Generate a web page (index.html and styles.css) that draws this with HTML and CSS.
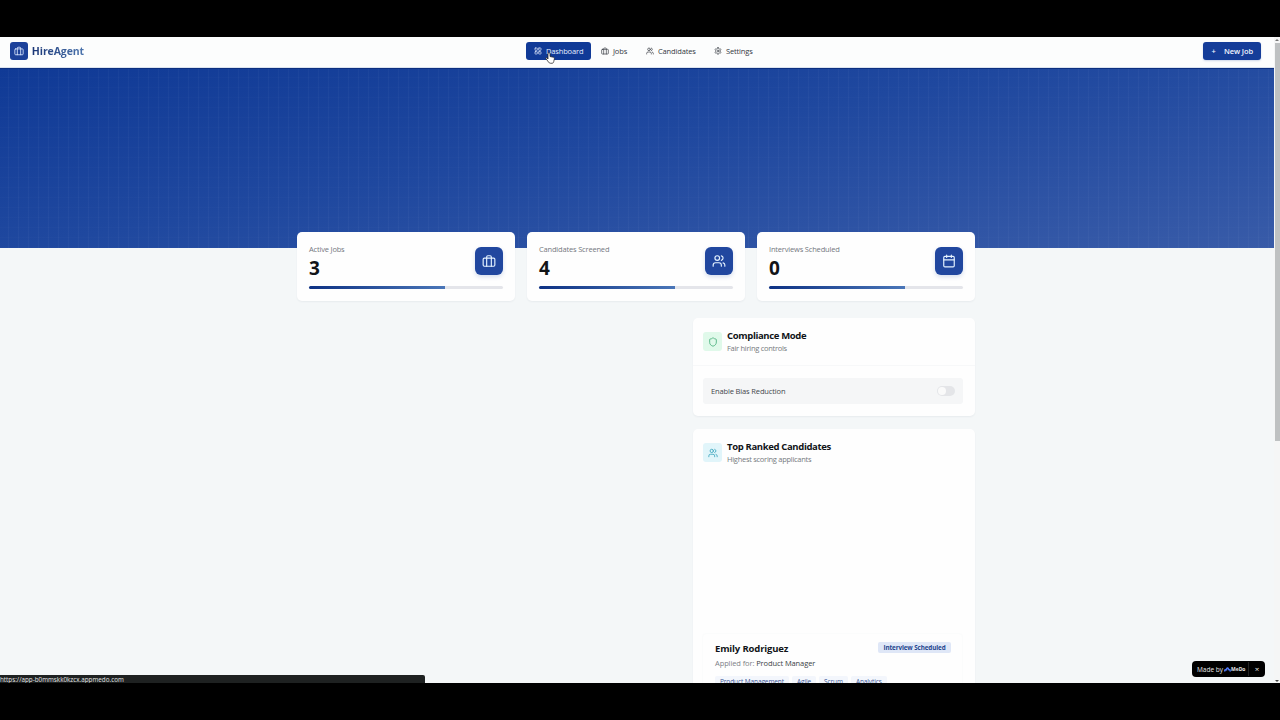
FILE: index.html
```html
<!DOCTYPE html>
<html lang="en">
<head>
    <meta charset="UTF-8">
    <meta name="viewport" content="width=device-width, initial-scale=1.0">
    <title>HireAgent</title>
    <link rel="stylesheet" href="styles.css">
</head>
<body>
    <svg class="sprite" width="0" height="0">
        <symbol id="briefcase" viewBox="0 0 24 24"><rect x="2" y="7" width="20" height="14" rx="2"/><path d="M16 21V5a2 2 0 0 0-2-2h-4a2 2 0 0 0-2 2v16"/></symbol>
        <symbol id="users" viewBox="0 0 24 24"><path d="M16 21v-2a4 4 0 0 0-4-4H6a4 4 0 0 0-4 4v2"/><circle cx="9" cy="7" r="4"/><path d="M22 21v-2a4 4 0 0 0-3-3.870M16 3.130a4 4 0 0 1 0 7.750"/></symbol>
        <symbol id="users-round" viewBox="0 0 24 24"><path d="M18 21a8 8 0 0 0-16 0"/><circle cx="10" cy="8" r="5"/><path d="M22 20c0-3.370-2-6.500-4-8a5 5 0 0 0-.45-8.300"/></symbol>
        <symbol id="calendar" viewBox="0 0 24 24"><rect x="3" y="4" width="18" height="18" rx="2"/><path d="M8 2v4M16 2v4M3 10h18"/></symbol>
        <symbol id="shield" viewBox="0 0 24 24"><path d="M20 13c0 5-3.5 7.5-7.66 8.95a1 1 0 0 1-.67-.01C7.5 20.500 4 18 4 13V6a1 1 0 0 1 1-1c2 0 4.500-1.200 6.240-2.720a1.170 1.170 0 0 1 1.520 0C14.510 3.810 17 5 19 5a1 1 0 0 1 1 1z"/></symbol>
        <symbol id="dashboard" viewBox="0 0 24 24"><rect x="3" y="3" width="7" height="7" rx="1"/><rect x="14" y="3" width="7" height="7" rx="1"/><rect x="14" y="14" width="7" height="7" rx="1"/><rect x="3" y="14" width="7" height="7" rx="1"/></symbol>
        <symbol id="settings" viewBox="0 0 24 24"><path d="M12.220 2h-.44a2 2 0 0 0-2 2v.18a2 2 0 0 1-1 1.730l-.43.250a2 2 0 0 1-2 0l-.15-.08a2 2 0 0 0-2.730.730l-.22.380a2 2 0 0 0 .730 2.730l.150.100a2 2 0 0 1 1 1.720v.510a2 2 0 0 1-1 1.740l-.15.090a2 2 0 0 0-.73 2.730l.220.380a2 2 0 0 0 2.730.730l.150-.08a2 2 0 0 1 2 0l.430.250a2 2 0 0 1 1 1.730V20a2 2 0 0 0 2 2h.440a2 2 0 0 0 2-2v-.18a2 2 0 0 1 1-1.730l.430-.25a2 2 0 0 1 2 0l.150.080a2 2 0 0 0 2.730-.73l.220-.39a2 2 0 0 0-.73-2.730l-.15-.08a2 2 0 0 1-1-1.740v-.5a2 2 0 0 1 1-1.740l.150-.09a2 2 0 0 0 .730-2.730l-.22-.38a2 2 0 0 0-2.730-.73l-.15.080a2 2 0 0 1-2 0l-.43-.25a2 2 0 0 1-1-1.730V4a2 2 0 0 0-2-2z"/><circle cx="12" cy="12" r="3"/></symbol>
    </svg>

    <div class="screen">
        <div class="page">
            <header class="header">
                <div class="brand">
                    <span class="brand-icon"><svg class="icon"><use href="#briefcase"/></svg></span>
                    <span class="brand-name">HireAgent</span>
                </div>
                <nav class="nav">
                    <a class="nav-link active"><svg class="icon"><use href="#dashboard"/></svg><span>Dashboard</span></a>
                    <a class="nav-link nav-jobs"><svg class="icon"><use href="#briefcase"/></svg><span>Jobs</span></a>
                    <a class="nav-link nav-candidates"><svg class="icon"><use href="#users"/></svg><span>Candidates</span></a>
                    <a class="nav-link nav-settings"><svg class="icon"><use href="#settings"/></svg><span>Settings</span></a>
                </nav>
                <button class="new-job"><span class="plus">+</span><span>New Job</span></button>
            </header>

            <div class="hero"></div>

            <main class="container">
                <section class="stats">
                    <div class="card stat">
                        <div class="stat-top">
                            <div>
                                <div class="stat-label">Active Jobs</div>
                                <div class="stat-value">3</div>
                            </div>
                            <span class="stat-icon"><svg class="icon"><use href="#briefcase"/></svg></span>
                        </div>
                        <div class="progress"><div class="progress-bar"></div></div>
                    </div>
                    <div class="card stat">
                        <div class="stat-top">
                            <div>
                                <div class="stat-label">Candidates Screened</div>
                                <div class="stat-value">4</div>
                            </div>
                            <span class="stat-icon"><svg class="icon"><use href="#users"/></svg></span>
                        </div>
                        <div class="progress"><div class="progress-bar"></div></div>
                    </div>
                    <div class="card stat">
                        <div class="stat-top">
                            <div>
                                <div class="stat-label">Interviews Scheduled</div>
                                <div class="stat-value">0</div>
                            </div>
                            <span class="stat-icon"><svg class="icon"><use href="#calendar"/></svg></span>
                        </div>
                        <div class="progress"><div class="progress-bar"></div></div>
                    </div>
                </section>

                <aside class="sidebar">
                    <section class="card compliance">
                        <div class="card-header">
                            <span class="card-icon green"><svg class="icon"><use href="#shield"/></svg></span>
                            <div>
                                <h2>Compliance Mode</h2>
                                <p>Fair hiring controls</p>
                            </div>
                        </div>
                        <div class="setting">
                            <span>Enable Bias Reduction</span>
                            <span class="switch"></span>
                        </div>
                    </section>

                    <section class="card ranked">
                        <div class="card-header">
                            <span class="card-icon cyan"><svg class="icon"><use href="#users"/></svg></span>
                            <div>
                                <h2>Top Ranked Candidates</h2>
                                <p>Highest scoring applicants</p>
                            </div>
                        </div>
                        <div class="candidate">
                            <div class="candidate-top">
                                <h3>Emily Rodriguez</h3>
                                <span class="badge">Interview Scheduled</span>
                            </div>
                            <p class="applied">Applied for: <span>Product Manager</span></p>
                            <div class="tags">
                                <span class="tag">Product Management</span>
                                <span class="tag">Agile</span>
                                <span class="tag">Scrum</span>
                                <span class="tag">Analytics</span>
                            </div>
                        </div>
                    </section>
                </aside>
            </main>
        </div>

        <div class="scrollbar">
            <span class="arrow-up"></span>
            <div class="thumb"></div>
            <span class="arrow-down"></span>
        </div>

        <div class="made-by">
            <span class="made-text">Made by</span>
            <svg class="medo-logo" viewBox="0 0 14 10"><path d="M1.500 9C1 5 4 4.500 4.500 7 4.500 1 9 0 9 5c3-1 3.500 2 3 4" stroke="#4f78f5" stroke-width="3" fill="none"/></svg>
            <span class="medo">MeDo</span>
            <span class="made-close">×</span>
        </div>

        <div class="status-url">https://app-b0mmskk0kzcx.appmedo.com</div>

        <svg class="cursor" viewBox="0 0 20 24"><path d="M6 14V3.500a2 2 0 0 1 4 0V9l7 1.500c1.500.400 2 1.500 1.800 3L17.500 19c-.3 2-1.500 3.500-3.500 3.500h-3c-2 0-3-1-4-2.500L2 13.500C1 12 3 10.800 4.200 12z" fill="#fff" stroke="#222" stroke-width="1.500"/></svg>
    </div>
</body>
</html>
```

FILE: styles.css
```css
* {
    box-sizing: border-box;
}
body {
    margin: 0;
    height: 720px;
    padding: 37px 0;
    overflow: hidden;
    background: #000;
    font-family: "Open Sans", "Noto Sans", sans-serif;
    color: #111418;
}
h2, h3, p {
    margin: 0;
}
.sprite {
    position: absolute;
}
.icon {
    display: block;
    flex: none;
    width: 8px;
    height: 8px;
    fill: none;
    stroke: currentColor;
    stroke-width: 2;
    stroke-linecap: round;
    stroke-linejoin: round;
}
.screen {
    position: relative;
    display: flex;
    height: 646px;
    overflow: hidden;
    background: #f4f7f8;
}
.page {
    width: 1274px;
}

/* header */
.header {
    display: flex;
    align-items: center;
    justify-content: space-between;
    height: 31px;
    padding: 0 13px 3px 10px;
    background: #fcfdfd;
    border-bottom: 1px solid #dbe3ef;
}
.brand {
    display: flex;
    align-items: center;
    gap: 4px;
    width: 74px;
}
.brand-icon {
    display: flex;
    align-items: center;
    justify-content: center;
    width: 18px;
    height: 18px;
    border-radius: 3px;
    background: #1c419a;
    color: #dce8ff;
}
.brand-icon .icon {
    width: 10px;
    height: 10px;
}
.brand-name {
    font-size: 10.500px;
    font-weight: 700;
    letter-spacing: -0.1px;
    background: linear-gradient(90deg, #1a3676, #4b74ad);
    -webkit-background-clip: text;
    background-clip: text;
    color: transparent;
}
.nav {
    display: flex;
    gap: 2px;
}
.nav-link {
    display: flex;
    align-items: center;
    gap: 4px;
    height: 18px;
    padding-left: 8px;
    border-radius: 3px;
    font-size: 7.500px;
    letter-spacing: -0.15px;
    white-space: nowrap;
    color: #33383f;
}
.nav-link.active {
    width: 65px;
    background: #103a97;
    color: #e6efff;
}
.nav-jobs {
    width: 43px;
}
.nav-candidates {
    width: 66px;
}
.nav-settings {
    width: 55px;
}
.new-job {
    display: flex;
    align-items: center;
    gap: 8px;
    width: 58px;
    height: 18px;
    padding: 0 0 0 8px;
    border: none;
    border-radius: 3px;
    background: #153d99;
    color: #f0f5ff;
    font-family: inherit;
    font-size: 7.500px;
    font-weight: 600;
    letter-spacing: -0.1px;
    white-space: nowrap;
    box-shadow: 0 1px 2px rgba(20, 60, 150, 0.2);
}
.plus {
    width: 5px;
}

/* hero */
.hero {
    height: 180px;
    background:
        repeating-linear-gradient(90deg, transparent 0 8px, rgba(255, 255, 255, 0.03) 8px 9px, transparent 9px 10px),
        repeating-linear-gradient(180deg, transparent 0 8px, rgba(255, 255, 255, 0.01) 8px 9px, transparent 9px 10px),
        linear-gradient(170deg, #103a96 0%, #1f489f 45%, #385ba8 100%);
    border-top: 1px solid #0c2f80;
}

/* content */
.container {
    position: relative;
    width: 678px;
    margin: -16px 0 0 297px;
}
.card {
    background: #fefefe;
    border-radius: 5px;
    box-shadow: 0 1px 2px rgba(30, 50, 80, 0.06);
}
.stats {
    display: grid;
    grid-template-columns: repeat(3, 1fr);
    gap: 12px;
}
.stat {
    height: 69px;
    padding: 11px 12px;
}
.stat-top {
    display: flex;
    justify-content: space-between;
    height: 43px;
}
.stat-label {
    font-size: 7.500px;
    letter-spacing: -0.18px;
    line-height: 13px;
    color: #74787e;
}
.stat-value {
    font-size: 19px;
    font-weight: 700;
    line-height: 25px;
}
.stat-icon {
    display: flex;
    align-items: center;
    justify-content: center;
    width: 28px;
    height: 28px;
    margin-top: 4px;
    border-radius: 6px;
    background: #21479f;
    color: #e4f2ff;
    box-shadow: 0 2px 4px rgba(30, 70, 160, 0.18);
}
.stat-icon .icon {
    width: 14px;
    height: 14px;
}
.progress {
    height: 3px;
    border-radius: 2px;
    background: #e4e5ea;
}
.progress-bar {
    width: 70%;
    height: 3px;
    border-radius: 2px 0 0 2px;
    background: linear-gradient(90deg, #0e3284, #4a76b8);
}
.sidebar {
    width: 282px;
    margin: 17px 0 0 auto;
}
.compliance {
    height: 98px;
    margin-bottom: 13px;
}
.card-header {
    display: flex;
    align-items: center;
    gap: 5px;
    height: 48px;
    padding-left: 10px;
}
.compliance .card-header {
    border-bottom: 1px solid #f7f8f9;
}
.ranked .card-header {
    height: 47px;
}
.card-icon {
    display: flex;
    align-items: center;
    justify-content: center;
    width: 19px;
    height: 19px;
    border-radius: 3px;
}
.card-icon .icon {
    width: 10px;
    height: 10px;
}
.green {
    background: #e0f9ea;
    color: #45ad78;
}
.cyan {
    background: #e1f5fa;
    color: #3ba5bd;
}
h2 {
    font-size: 9.500px;
    font-weight: 700;
    letter-spacing: -0.35px;
    line-height: 13px;
}
.card-header p {
    font-size: 7.500px;
    letter-spacing: -0.28px;
    line-height: 12px;
    color: #767a80;
}
.setting {
    display: flex;
    align-items: center;
    justify-content: space-between;
    height: 26px;
    margin: 12px 12px 0 10px;
    padding: 0 8px;
    border-radius: 3px;
    background: #f5f6f7;
    font-size: 7.500px;
    letter-spacing: -0.14px;
    color: #43474c;
}
.switch {
    width: 18px;
    height: 10px;
    padding: 1px;
    border-radius: 5px;
    background: #e4e5e8;
}
.switch::before {
    content: "";
    display: block;
    width: 8px;
    height: 8px;
    border-radius: 50%;
    background: #fafafa;
}
.ranked {
    height: 300px;
}
.candidate {
    margin: 157px 12px 0 9px;
    padding: 8px 11px 8px 12px;
    border: 1px solid #fbfcfc;
    border-radius: 4px;
}
.candidate-top {
    display: flex;
    justify-content: space-between;
    height: 14px;
}
h3 {
    font-size: 9.500px;
    font-weight: 700;
    letter-spacing: -0.15px;
    line-height: 14px;
}
.badge {
    width: 73px;
    height: 11px;
    border-radius: 2px;
    background: #dfe7f7;
    color: #24458e;
    font-size: 6.300px;
    font-weight: 700;
    letter-spacing: -0.1px;
    line-height: 11px;
    text-align: center;
    white-space: nowrap;
}
.applied {
    font-size: 7.500px;
    letter-spacing: -0.1px;
    line-height: 14px;
    color: #7d8187;
}
.applied span {
    color: #3b3f45;
}
.tags {
    display: flex;
    gap: 3px;
    margin-top: 6px;
}
.tag {
    padding: 0 5px;
    border-radius: 2px;
    background: #f3f6fc;
    color: #3c5795;
    font-size: 6.500px;
    letter-spacing: -0.1px;
    line-height: 11px;
    white-space: nowrap;
}

/* browser scrollbar */
.scrollbar {
    display: flex;
    flex-direction: column;
    align-items: center;
    width: 6px;
    background: #f5f6f6;
}
.arrow-up,
.arrow-down {
    border-left: 2px solid transparent;
    border-right: 2px solid transparent;
}
.arrow-up {
    margin: 2px 0;
    border-bottom: 2px solid #777;
}
.arrow-down {
    margin: auto 0 1px;
    border-top: 2px solid #444;
}
.thumb {
    width: 5px;
    height: 398px;
    margin-left: 1px;
    background: #bec1c2;
}

/* overlays */
.made-by {
    position: absolute;
    right: 15px;
    bottom: 6px;
    display: flex;
    align-items: center;
    width: 73px;
    height: 16px;
    padding-left: 5px;
    border-radius: 4px;
    background: #000;
    color: #e8e8e8;
    font-size: 6.500px;
    white-space: nowrap;
}
.made-text {
    width: 27px;
}
.medo-logo {
    width: 7px;
    height: 5px;
}
.medo {
    width: 17px;
    font-size: 5px;
    font-weight: 700;
}
.made-close {
    flex: 1;
    height: 14px;
    border-left: 1px solid #222;
    font-size: 8px;
    line-height: 14px;
    text-align: center;
}
.status-url {
    position: absolute;
    left: 0;
    bottom: 0;
    width: 425px;
    height: 8px;
    overflow: hidden;
    border-radius: 0 2px 0 0;
    background: #1e2121;
    color: #e2e4e4;
    font-size: 6.300px;
    line-height: 10px;
}
.cursor {
    position: absolute;
    left: 545px;
    top: 15px;
    width: 10px;
    height: 12px;
}
```
